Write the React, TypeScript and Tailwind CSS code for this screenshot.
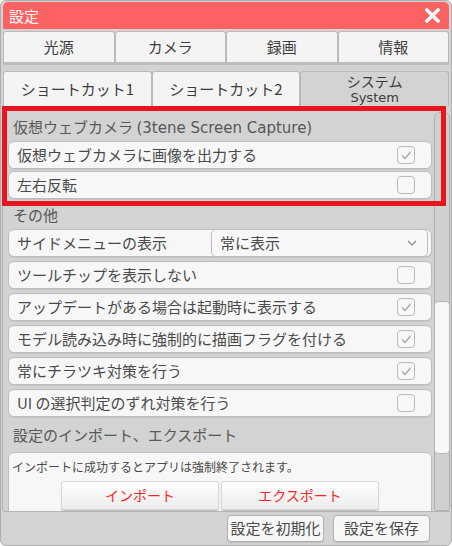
import React from "react";

const Check = ({ on }: { on: boolean }) => (
  <div className="w-[18px] h-[18px] rounded-[4px] border border-[#b9b9b9] bg-[#f7f7f7] flex items-center justify-center shrink-0">
    {on && (
      <svg width="14" height="14" viewBox="0 0 14 14">
        <polyline points="3,7.5 6,10.5 11.5,4" fill="none" stroke="#a8a8a8" strokeWidth="1.3" />
      </svg>
    )}
  </div>
);

const Row = ({ label, on, gapTop }: { label: string; on: boolean; gapTop: string }) => (
  <div className={`${gapTop} h-[28px] flex items-center justify-between pl-[8px] pr-[16px] bg-[#f7f7f7] border border-[#bdbdbd] rounded-[6px] shadow-[0_1px_0_#c4c4c4]`}>
    <span className="text-[15px] leading-[26px] text-[#4a4a4a] whitespace-nowrap">{label}</span>
    <Check on={on} />
  </div>
);

export default function App() {
  return (
    <div className="w-[452px] h-[546px] bg-[#d3d3d3] border border-[#aeaeae] rounded-[6px] flex flex-col relative overflow-hidden font-['Noto_Sans_CJK_JP','Noto_Sans',sans-serif]">
      {/* title */}
      <div className="mt-[1px] mx-[2px] h-[27px] bg-[#ff6262] rounded-t-[5px] flex items-center justify-between pl-[6px] pr-[9px] shrink-0">
        <span className="text-white text-[15px] leading-[27px]">設定</span>
        <svg width="15" height="15" viewBox="0 0 15 15">
          <path d="M2 2 L13 13 M13 2 L2 13" stroke="#ffffff" strokeWidth="3.4" strokeLinecap="square" />
        </svg>
      </div>

      {/* tab row 1 */}
      <div className="mt-[2px] mx-[2px] h-[34px] grid grid-cols-4 shrink-0">
        {["光源", "カメラ", "録画", "情報"].map((t) => (
          <div key={t} className="bg-[#f4f4f4] border border-[#bababa] border-b-[3px] border-b-[#bdbdbd] rounded-t-[3px] flex items-center justify-center text-[15px] text-[#3c3c3c]">
            {t}
          </div>
        ))}
      </div>

      {/* tab row 2 */}
      <div className="mt-[6px] mx-[2px] h-[35px] grid grid-cols-3 shrink-0">
        {["ショートカット1", "ショートカット2"].map((t) => (
          <div key={t} className="bg-[#f4f4f4] border border-[#bababa] border-b-0 rounded-t-[3px] flex items-center justify-center text-[15px] text-[#3c3c3c]">
            {t}
          </div>
        ))}
        <div className="bg-[#d3d3d3] border border-[#bababa] border-b-0 rounded-t-[3px] flex flex-col items-center justify-center text-[#3c3c3c]">
          <span className="block text-[14px] leading-[17px]">システム</span>
          <span className="block text-[13px] leading-[16px] font-['DejaVu_Sans',sans-serif]">System</span>
        </div>
      </div>

      {/* panel */}
      <div className="mx-[1px] h-[406px] flex shrink-0 border-l border-b border-[#b5b5b5] rounded-bl-[4px] overflow-hidden">
        <div className="w-[430px] pl-[5px] flex flex-col overflow-hidden">
          <div className="mt-[10px] h-[22px] pl-[5px] text-[15px] leading-[22px] text-[#585858] whitespace-nowrap">
            仮想ウェブカメラ <span className="font-['DejaVu_Sans',sans-serif] text-[15px]">(3tene Screen Capture)</span>
          </div>
          <Row gapTop="mt-[3px]" label="仮想ウェブカメラに画像を出力する" on={true} />
          <Row gapTop="mt-[2px]" label="左右反転" on={false} />

          <div className="mt-[5px] h-[22px] pl-[5px] text-[15px] leading-[22px] text-[#585858]">その他</div>
          <div className="mt-[3px] h-[28px] flex items-center bg-[#f7f7f7] border border-[#bdbdbd] rounded-[6px] shadow-[0_1px_0_#c4c4c4] pl-[8px]">
            <span className="text-[15px] leading-[26px] text-[#4a4a4a] whitespace-nowrap">サイドメニューの表示</span>
            <div className="ml-auto mr-[3px] -my-[1px] h-[28px] w-[217px] border border-[#bdbdbd] rounded-[5px] bg-[#f8f8f8] flex items-center justify-between pl-[8px] pr-[10px]">
              <span className="text-[15px] leading-[26px] text-[#4a4a4a]">常に表示</span>
              <svg width="10" height="6" viewBox="0 0 10 6">
                <polyline points="1,1 5,5 9,1" fill="none" stroke="#8a8a8a" strokeWidth="1.2" />
              </svg>
            </div>
          </div>
          <Row gapTop="mt-[4px]" label="ツールチップを表示しない" on={false} />
          <Row gapTop="mt-[4px]" label="アップデートがある場合は起動時に表示する" on={true} />
          <Row gapTop="mt-[4px]" label="モデル読み込み時に強制的に描画フラグを付ける" on={true} />
          <Row gapTop="mt-[4px]" label="常にチラツキ対策を行う" on={true} />
          <Row gapTop="mt-[4px]" label="UI の選択判定のずれ対策を行う" on={false} />

          <div className="mt-[7px] h-[22px] pl-[5px] text-[15px] leading-[22px] text-[#585858] whitespace-nowrap">
            設定のインポート、エクスポート
          </div>
          <div className="mt-[6px] h-[80px] shrink-0 bg-[#f7f7f7] border border-[#bdbdbd] rounded-[6px] flex flex-col">
            <div className="mt-[5px] pl-[3px] h-[18px] text-[12px] leading-[18px] text-[#4a4a4a] whitespace-nowrap">
              インポートに成功するとアプリは強制終了されます。
            </div>
            <div className="mt-[5px] flex justify-center gap-[2px]">
              {["インポート", "エクスポート"].map((t) => (
                <div key={t} className="w-[158px] h-[29px] rounded-[3px] border border-[#d6d6d6] bg-gradient-to-b from-[#ffffff] to-[#ececec] shadow-[0_1px_1px_#bdbdbd] flex items-center justify-center text-[14px] text-[#ff2424]">
                  {t}
                </div>
              ))}
            </div>
          </div>
        </div>
        {/* scrollbar */}
        <div className="ml-[2px] w-[16px] mt-[6px] flex flex-col border border-[#b0b0b0] rounded-t-[6px] rounded-b-[3px] bg-[#d0d0d0]">
          <div className="mt-[188px] -mx-[1px] h-[153px] bg-[#f8f8f8] border border-[#b5b5b5] rounded-[4px]" />
        </div>
      </div>

      {/* footer */}
      <div className="flex-1 flex justify-end items-start pt-[3px] pr-[21px] gap-[9px]">
        {["設定を初期化", "設定を保存"].map((t) => (
          <div key={t} className="w-[97px] h-[27px] bg-[#f7f7f7] border border-[#b0b0b0] rounded-[4px] flex items-center justify-center text-[15px] text-[#4a4a4a] shadow-[0_1px_0_#c0c0c0]">
            {t}
          </div>
        ))}
      </div>

      {/* red highlight annotation */}
      <div className="absolute left-[1px] top-[105px] w-[444px] h-[100px] border-[5px] border-[#e8141e] pointer-events-none" />
    </div>
  );
}
